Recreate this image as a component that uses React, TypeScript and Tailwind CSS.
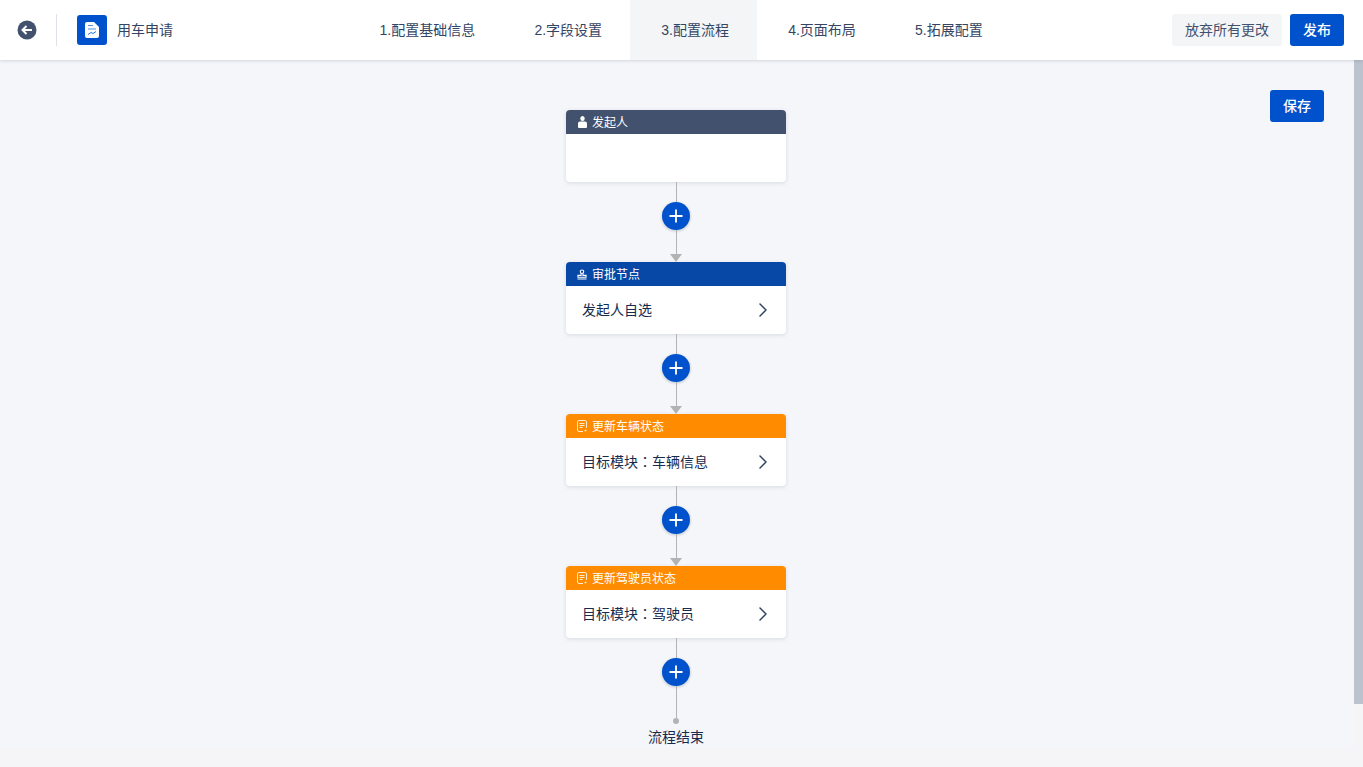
import React from 'react'
import { ChevronRight, Plus } from 'lucide-react'

const font = { fontFamily: '"Liberation Sans", "Noto Sans CJK SC", sans-serif' }

const tabs = ['1.配置基础信息', '2.字段设置', '3.配置流程', '4.页面布局', '5.拓展配置']

function BackIcon() {
  return (
    <svg width="20" height="20" viewBox="0 0 20 20">
      <circle cx="10" cy="10" r="9.5" fill="#42526e" />
      <path d="M15 10H6M9.5 6L5.5 10L9.5 14" fill="none" stroke="#fff" strokeWidth="2" />
    </svg>
  )
}

function DocIcon() {
  return (
    <svg width="14" height="16" viewBox="0 0 14 16">
      <path d="M2 0H9L14 5V14a2 2 0 0 1-2 2H2a2 2 0 0 1-2-2V2a2 2 0 0 1 2-2Z" fill="#fff" />
      <path d="M3 3.5H8M3 7H11" stroke="#5b8fe0" strokeWidth="1" />
      <path d="M3 12.5L6 10.5L8 11.5L11 9.5" fill="none" stroke="#2f73d8" strokeWidth="1" />
    </svg>
  )
}

function PersonIcon() {
  return (
    <svg width="9" height="12" viewBox="0 0 9 12" fill="#fff">
      <ellipse cx="4.5" cy="2.6" rx="2.2" ry="2.5" />
      <path d="M0 7.5a2 2 0 0 1 2-2h5a2 2 0 0 1 2 2V11a1 1 0 0 1-1 1H1a1 1 0 0 1-1-1Z" />
    </svg>
  )
}

function StampIcon() {
  return (
    <svg width="11" height="11" viewBox="0 0 11 11" fill="none" stroke="#fff" strokeWidth="1.2">
      <circle cx="5.5" cy="2.4" r="1.9" />
      <path d="M4.5 4.5V6.5H1V8.5H10V6.5H6.5V4.5" />
      <path d="M0.5 10.4H10.5" />
    </svg>
  )
}

function NoteIcon() {
  return (
    <svg width="10" height="12" viewBox="0 0 10 12" fill="none" stroke="#ffeccc" strokeWidth="1">
      <path d="M6 11.5H2A1.5 1.5 0 0 1 0.5 10V2A1.5 1.5 0 0 1 2 0.5H8A1.5 1.5 0 0 1 9.5 2V8" />
      <path d="M2.5 3.5H7.5M2.5 5.5H7.5M2.5 7.5H5.5" />
      <circle cx="8.5" cy="10.5" r="1" fill="#ffeccc" stroke="none" />
    </svg>
  )
}

interface FlowNodeProps {
  title: string
  color: string
  icon: React.ReactNode
  body?: React.ReactNode
}

function FlowNode({ title, color, icon, body }: FlowNodeProps) {
  return (
    <div className="w-[220px] h-fit rounded-[4px] bg-white shadow-[0_1px_4px_rgba(9,30,66,0.13)] overflow-hidden">
      <div className={`h-6 flex items-center pl-[11px] gap-[5px] text-xs text-white ${color}`}>
        <span className="w-[10px] flex justify-center shrink-0">{icon}</span>
        <span className="pt-[2px]">{title}</span>
      </div>
      <div className="h-12 flex items-center justify-between pl-4 pr-[11px] text-sm text-[#172b4d]">
        <span>{body}</span>
        {body && <ChevronRight size={24} strokeWidth={1.5} color="#344563" />}
      </div>
    </div>
  )
}

function ModuleLabel({ name }: { name: string }) {
  return (
    <>
      目标模块
      <span className="leading-none" style={{ fontFamily: '"Noto Sans CJK TC", sans-serif' }}>：</span>
      {name}
    </>
  )
}

function AddButton() {
  return (
    <div className="w-7 h-7 rounded-full bg-[#0052cc] flex items-center justify-center shrink-0 shadow-[0_1px_3px_rgba(9,30,66,0.25)]">
      <Plus size={20} strokeWidth={2.2} color="#fff" />
    </div>
  )
}

function Connector() {
  return (
    <div className="h-20 flex flex-col items-center">
      <div className="w-px h-5 ml-px bg-[#b3b3b3]" />
      <AddButton />
      <div className="w-px flex-1 ml-px bg-[#b3b3b3]" />
      <div className="w-0 h-0 border-x-[6px] border-x-transparent border-t-[8px] border-t-[#b3b3b3]" />
    </div>
  )
}

export default function App() {
  return (
    <div style={font} className="w-[1363px] h-[767px] flex flex-col bg-[#f5f5f7] overflow-hidden">
      <header className="h-[60px] shrink-0 bg-white flex items-center shadow-[0_1px_3px_rgba(9,30,66,0.15)] relative z-10">
        <div className="w-[348.5px] flex items-center pl-[17px]">
          <BackIcon />
          <div className="w-px h-8 bg-[#dfe1e6] ml-[19px] mr-5" />
          <div className="w-[30px] h-[30px] rounded-[3px] bg-[#0052cc] flex items-center justify-center">
            <DocIcon />
          </div>
          <span className="ml-[10px] text-sm text-[#344563]">用车申请</span>
        </div>
        <nav className="flex h-full">
          {tabs.map((tab) => (
            <div
              key={tab}
              className={`h-full flex items-center pl-[31px] pr-[28.2px] text-sm text-[#344563] ${tab.startsWith('3') ? 'bg-[#f4f5f7]' : ''}`}
            >
              {tab}
            </div>
          ))}
        </nav>
        <div className="ml-auto flex items-center gap-2 pr-[19px]">
          <button className="h-8 w-[110px] rounded-[3px] bg-[#f4f5f7] text-sm text-[#42526e]">放弃所有更改</button>
          <button className="h-8 w-[54px] rounded-[3px] bg-[#0052cc] text-sm font-medium text-white">发布</button>
        </div>
      </header>
      <div className="flex-1 flex items-start">
        <main className="w-[1354px] h-[688px] bg-[#f5f6fa] relative pr-[2px]">
          <button className="absolute top-[30px] right-[30px] h-8 w-[54px] rounded-[3px] bg-[#0052cc] text-sm font-medium text-white">保存</button>
          <div className="flex flex-col items-center pt-[50px]">
            <FlowNode title="发起人" color="bg-[#42526e]" icon={<PersonIcon />} />
            <Connector />
            <FlowNode title="审批节点" color="bg-[#0747a6]" icon={<StampIcon />} body="发起人自选" />
            <Connector />
            <FlowNode title="更新车辆状态" color="bg-[#ff8b00]" icon={<NoteIcon />} body={<ModuleLabel name="车辆信息" />} />
            <Connector />
            <FlowNode title="更新驾驶员状态" color="bg-[#ff8b00]" icon={<NoteIcon />} body={<ModuleLabel name="驾驶员" />} />
            <div className="h-[83px] flex flex-col items-center">
              <div className="w-px h-5 ml-px bg-[#b3b3b3]" />
              <AddButton />
              <div className="w-px flex-1 ml-px bg-[#b3b3b3]" />
              <div className="w-[6px] h-[6px] rounded-full bg-[#b3b3b3] -mb-[3px]" />
            </div>
            <span className="mt-[6px] text-sm leading-[20px] text-[#172b4d]">流程结束</span>
          </div>
        </main>
        <div className="w-[9px] h-[644px] bg-[#bcc3ce]" />
      </div>
    </div>
  )
}
